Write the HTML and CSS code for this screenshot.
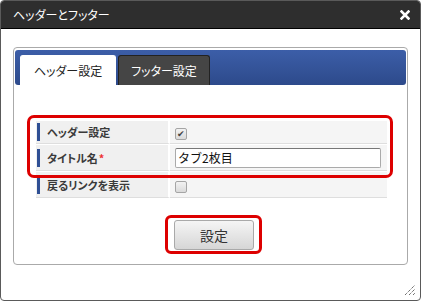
FILE: index.html
```html
<!DOCTYPE html>
<html lang="ja">
<head>
    <meta charset="UTF-8">
    <meta name="viewport" content="width=device-width, initial-scale=1.0">
    <title>ヘッダーとフッター</title>
    <link rel="stylesheet" href="styles.css">
</head>
<body>

    <div class="dialog">
        <div class="titlebar">
            <span class="title">ヘッダーとフッター</span>
            <svg class="close" width="10" height="10" viewBox="0 0 10 10">
                <path d="M1.5 1.5 L8.5 8.5 M8.5 1.5 L1.5 8.5" stroke="#fff" stroke-width="2.6" stroke-linecap="square" />
            </svg>
        </div>

        <div class="body">
            <div class="panel">
                <div class="tabs">
                    <div class="tab active">ヘッダー設定</div>
                    <div class="tab">フッター設定</div>
                </div>

                <div class="tab-content">
                    <table class="form">
                        <tr class="row-1">
                            <td class="label"><div>ヘッダー設定</div></td>
                            <td class="value"><span class="check on">&#10004;</span></td>
                        </tr>
                        <tr class="row-2">
                            <td class="label"><div>タイトル名<span class="req">*</span></div></td>
                            <td class="value"><input class="text" type="text" value="タブ2枚目"></td>
                        </tr>
                        <tr class="row-3">
                            <td class="label"><div>戻るリンクを表示</div></td>
                            <td class="value"><span class="check"></span></td>
                        </tr>
                    </table>

                    <!-- red highlight over the first two rows -->
                    <div class="highlight"></div>

                    <div class="actions">
                        <span class="mark"><button class="btn">設定</button></span>
                    </div>
                </div>
            </div>
        </div>

        <svg class="grip" width="12" height="12" viewBox="0 0 12 12">
            <path d="M1 11 L11 1 M5 11 L11 5 M9 11 L11 9" stroke="#333" stroke-width="1" stroke-dasharray="1 1" />
        </svg>
    </div>

</body>
</html>
```

FILE: styles.css
```css
body {
  margin: 0;
  font-family: "Noto Sans CJK JP", "Noto Sans", sans-serif;
  font-feature-settings: "palt";
  color: #333;
}

.dialog {
  position: relative;
  width: 421px;
  height: 301px;
  box-sizing: border-box;
  border: 1px solid #5a5a5a;
  border-radius: 4px;
  background: #fff;
  overflow: hidden;
}

.titlebar {
  height: 27px;
  display: flex;
  align-items: center;
  justify-content: space-between;
  padding: 0 10px 0 12px;
  background: #2e2e2e;
  border-bottom: 1px solid #000;
}

.title {
  color: #fff;
  font-size: 12px;
}

.body {
  padding: 18px 12px 0 12px;
}

.panel {
  border: 1px solid #aaa;
  border-radius: 4px;
  padding: 2px 1px 10px 1px;
}

.tabs {
  height: 35px;
  box-sizing: border-box;
  display: flex;
  align-items: flex-end;
  gap: 2px;
  padding: 0 5px;
  border-radius: 3px;
  background: linear-gradient(#3c5ea8, #2d4a8b);
}

.tab {
  height: 30px;
  box-sizing: border-box;
  width: 92px;
  line-height: 29px;
  text-align: center;
  font-size: 12px;
  border-radius: 3px 3px 0 0;
  background: #454545;
  border: 1px solid #222;
  border-bottom: none;
  color: #fff;
}

.tab.active {
  width: 96px;
  background: #fff;
  border-color: #fff;
  color: #222;
}

.tab-content {
  position: relative;
  padding: 35px 19px 0 21px;
}

.form {
  width: 351px;
  border-collapse: separate;
  border-spacing: 0;
  font-size: 11px;
}

.form td {
  padding: 0;
  border-bottom: 1px solid #dedede;
  border-top: 1px solid #fff;
}

.row-1 td {
  height: 22px;
}

.row-2 td,
.row-3 td {
  height: 25px;
}

.label {
  width: 132px;
  background: #f0f0f0;
  border-right: 2px solid #fff;
  font-weight: bold;
  color: #3a3a3a;
}

.label div {
  margin: 1px 0 1px 1px;
  border-left: 3px solid #2f4f94;
  padding-left: 7px;
  line-height: 18px;
}

.req {
  color: #e33;
  margin-left: 1px;
}

.value {
  background: #f5f5f5;
  padding-left: 5px !important;
}

.check {
  display: inline-block;
  width: 10px;
  height: 10px;
  border: 1px solid #a5a5a5;
  border-radius: 2px;
  background: linear-gradient(#f2f2f2, #dadada);
  vertical-align: middle;
  font-size: 9px;
  line-height: 10px;
  text-align: center;
  color: #444;
  font-weight: normal;
}

.text {
  width: 206px;
  height: 20px;
  box-sizing: border-box;
  margin: 0;
  padding: 0 2px;
  border: 1px solid #aaa;
  border-top-color: #777;
  border-radius: 2px;
  font-family: "Noto Sans CJK JP", sans-serif;
  font-size: 12px;
  color: #111;
  vertical-align: middle;
}

.highlight {
  position: absolute;
  left: 12px;
  top: 30px;
  width: 366px;
  height: 63px;
  box-sizing: border-box;
  border: 3px solid #dd0000;
  border-radius: 7px;
}

.actions {
  margin-top: 17px;
  text-align: center;
  font-size: 0;
}

.mark {
  display: inline-block;
  margin-left: 4px;
  padding: 2px 5px 1px 6px;
  border: 3px solid #dd0000;
  border-radius: 6px;
}

.btn {
  width: 80px;
  height: 30px;
  border: 1px solid #a9a9a9;
  border-radius: 3px;
  background: linear-gradient(#f5f5f5, #d6d6d6);
  font-family: "Noto Sans CJK JP", sans-serif;
  font-size: 14px;
  color: #333;
  padding: 0;
}

.grip {
  position: absolute;
  right: 4px;
  bottom: 4px;
}
```
